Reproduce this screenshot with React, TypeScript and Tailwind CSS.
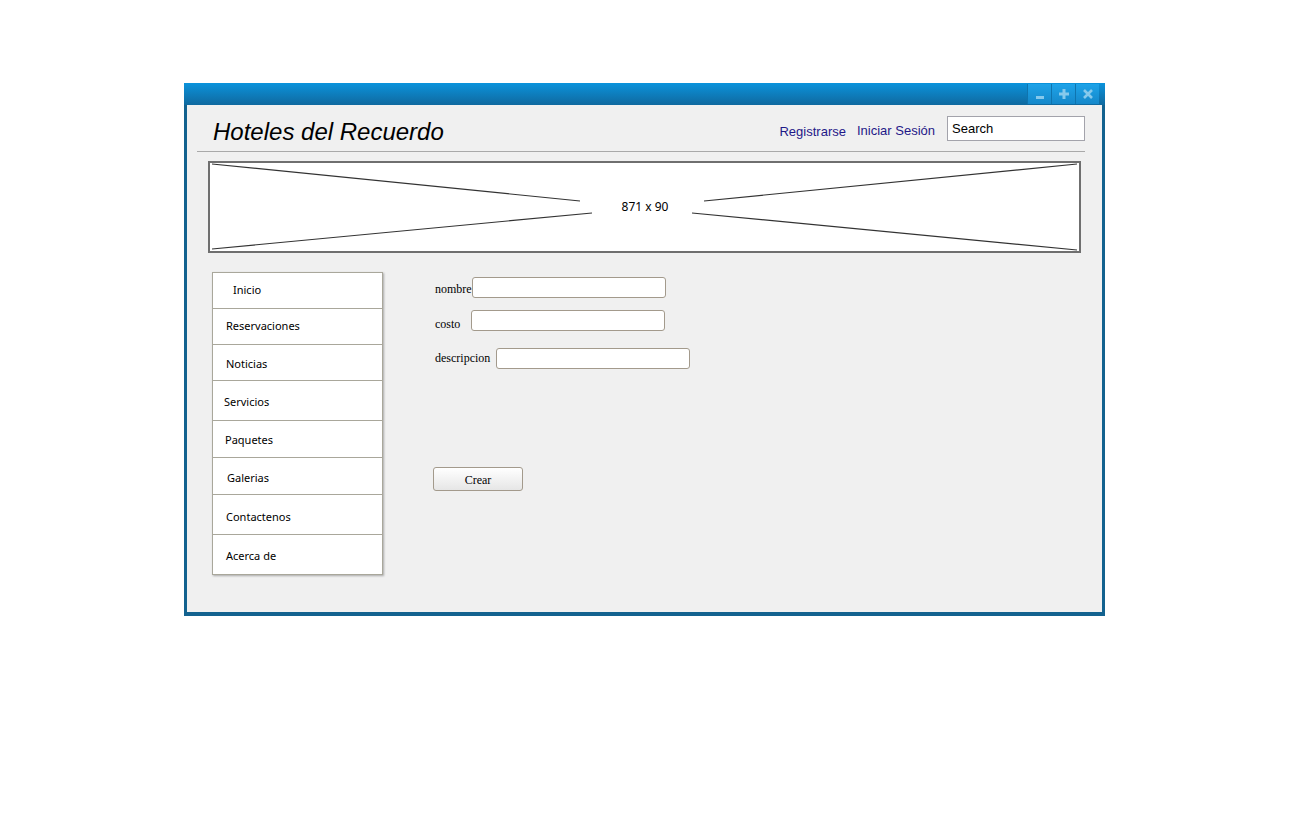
import React from "react";

const navItems = [
  { label: "Inicio", h: "h-[35px]", pl: "pl-[20px]", pt: "pt-0" },
  { label: "Reservaciones", h: "h-[36px]", pl: "pl-[13px]", pt: "pt-0" },
  { label: "Noticias", h: "h-[36px]", pl: "pl-[13px]", pt: "pt-[4px]" },
  { label: "Servicios", h: "h-[40px]", pl: "pl-[11px]", pt: "pt-[4px]" },
  { label: "Paquetes", h: "h-[37px]", pl: "pl-[12px]", pt: "pt-[3px]" },
  { label: "Galerias", h: "h-[37px]", pl: "pl-[14px]", pt: "pt-[5px]" },
  { label: "Contactenos", h: "h-[40px]", pl: "pl-[13px]", pt: "pt-[6px]" },
  { label: "Acerca de", h: "h-[40px]", pl: "pl-[13px]", pt: "pt-[4px]" },
];

function TitleButton({ kind }: { kind: "min" | "max" | "close" }) {
  return (
    <div className="flex h-[20px] w-[24px] items-center justify-center border-l border-[#0f74ae] bg-linear-to-b from-[#1ea3e8] to-[#1588ca]">
      <svg width="12" height="12" viewBox="0 0 12 12">
        {kind === "min" && <rect x="2" y="8" width="8" height="3" fill="#86c9ec" />}
        {kind === "max" && (
          <>
            <rect x="4.5" y="1" width="3" height="10" fill="#86c9ec" />
            <rect x="1" y="4.5" width="10" height="3" fill="#86c9ec" />
          </>
        )}
        {kind === "close" && (
          <path d="M2 2 L10 10 M10 2 L2 10" stroke="#86c9ec" strokeWidth="2.6" />
        )}
      </svg>
    </div>
  );
}

function Banner() {
  return (
    <div className="relative ml-[21px] mt-[9px] h-[92px] w-[873px] border-2 border-[#6f6f6f] bg-white">
      <svg className="absolute inset-0" width="869" height="88" viewBox="0 0 869 88">
        <g stroke="#333" strokeWidth="1.2" fill="none">
          <line x1="2" y1="1" x2="370" y2="38" />
          <line x1="2" y1="86" x2="382" y2="50" />
          <line x1="494" y1="38" x2="867" y2="1" />
          <line x1="482" y1="50" x2="867" y2="87" />
        </g>
      </svg>
      <div className="absolute left-[411px] top-[36px] w-[48px] text-center text-[12px] leading-[16px] text-black [font-family:'Noto_Sans',sans-serif]">
        871 x 90
      </div>
    </div>
  );
}

export default function App() {
  return (
    <div className="min-h-screen bg-white pl-[184px] pt-[83px]">
      <div className="flex w-[921px] flex-col">
        {/* title bar */}
        <div className="flex h-[22px] items-start justify-end bg-linear-to-b from-[#0a93dc] to-[#0f699f] pr-[6px] pt-px">
          <TitleButton kind="min" />
          <TitleButton kind="max" />
          <TitleButton kind="close" />
        </div>

        <div className="h-[511px] border-x-[3px] border-b-[4px] border-[#13628f] bg-[#f0f0f0]">
          {/* header */}
          <div className="mt-[11px] flex h-[25px] items-center justify-between pl-[26px] pr-[17px]">
            <div className="mt-[6px] text-[24px] italic leading-[28px] text-black [font-family:'Liberation_Sans',Arial,sans-serif]">
              Hoteles del Recuerdo
            </div>
            <div className="flex items-center text-[13px] [font-family:'Liberation_Sans',Arial,sans-serif]">
              <a className="mt-[6px] text-[#1f1888]">Registrarse</a>
              <a className="ml-[11px] mt-[4px] text-[#1f1888]">Iniciar Sesión</a>
              <div className="ml-[12px] flex h-[25px] w-[138px] items-center border border-[#a3a3ab] bg-white pl-[4px] text-black">
                Search
              </div>
            </div>
          </div>

          <div className="ml-[10px] mr-[17px] mt-[10px] h-px bg-[#a9a9a9]" />

          <Banner />

          <div className="mt-[19px] flex">
            <nav className="ml-[25px] w-[171px] border border-[#a9a79b] bg-white shadow-[1px_1px_2px_rgba(0,0,0,0.3)] [font-family:'Noto_Sans',sans-serif]">
              {navItems.map((item, i) => (
                <div
                  key={item.label}
                  className={`flex items-center text-[11px] text-black ${item.h} ${item.pl} ${item.pt} ${i > 0 ? "border-t border-[#a9a79b]" : ""}`}
                >
                  {item.label}
                </div>
              ))}
            </nav>

            <div className="ml-[52px] pt-[5px] text-[12px] text-black [font-family:'Liberation_Serif','Times_New_Roman',serif]">
              <div className="flex h-[21px] items-center">
                <span className="pt-[2px]">nombre</span>
                <div className="h-[21px] w-[194px] rounded-[3px] border border-[#a39a8c] bg-white" />
              </div>
              <div className="mt-[12px] flex h-[21px] items-center">
                <span className="w-[36px] pt-[6px]">costo</span>
                <div className="h-[21px] w-[194px] rounded-[3px] border border-[#a39a8c] bg-white" />
              </div>
              <div className="mt-[17px] flex h-[21px] items-center">
                <span className="mr-[6px] pb-[2px]">descripcion</span>
                <div className="h-[21px] w-[194px] rounded-[3px] border border-[#a39a8c] bg-white" />
              </div>
              <button className="-ml-[2px] mt-[98px] flex h-[24px] w-[90px] items-center justify-center rounded-[3px] border border-[#a39a8c] bg-linear-to-b from-white to-[#e6e6e6] pt-[2px] text-[12px]">
                Crear
              </button>
            </div>
          </div>
        </div>
      </div>
    </div>
  );
}
